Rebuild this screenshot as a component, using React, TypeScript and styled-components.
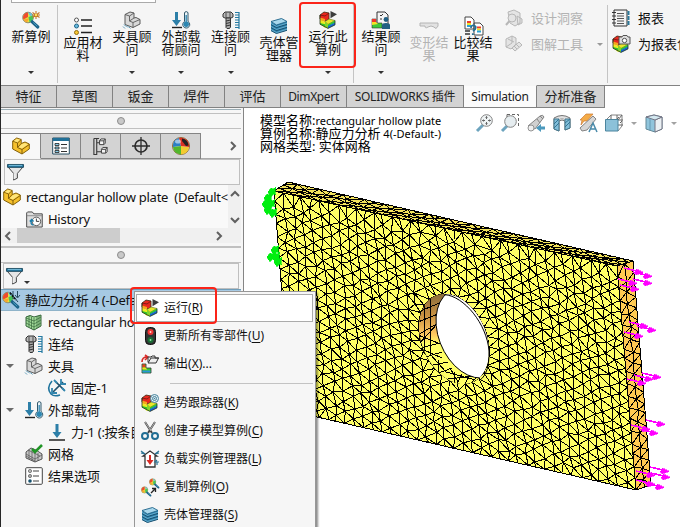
import React from "react";
import styled, { createGlobalStyle } from "styled-components";

const Global = createGlobalStyle`
  * { box-sizing: border-box; }
  body { margin: 0; overflow: hidden; background: #fff; }
`;

const latin = `"Noto Sans", "Noto Sans CJK SC", sans-serif`;

/* ---------- icons (18 x 18 grid) ---------- */

const Magnifier = () => (
  <>
    <circle cx="6" cy="6.5" r="5.3" fill="#e7e13c" stroke="#8a8a72" />
    <path d="M6 1.4a5 5 0 0 0-4.6 7L6 6z" fill="#ef4b2f" />
    <path d="M1.4 8.4A5 5 0 0 0 5 11.4l2-4z" fill="#f7a531" />
    <path d="M6.5 6l4.4-1.4A5 5 0 0 1 7.5 11.3z" fill="#46c35b" />
    <path d="M6 1.5a5 5 0 0 1 4.8 3L8 5z" fill="#62bfe6" />
    <path d="M10.2 10.8l5.6 5.2" stroke="#1c6389" strokeWidth="3.2" strokeLinecap="round" />
    <path d="M11.2 11.4l4 3.7" stroke="#4d9cc0" strokeWidth="1" />
  </>
);

const RainbowCube = () => (
  <>
    <path d="M1 4l4-3 5 1v6l-3 2-6-2z" fill="#e8281e" stroke="#3a2a12" strokeWidth=".8" />
    <path d="M1 4l5 1 4-3" fill="none" stroke="#5c1510" strokeWidth=".7" />
    <path d="M1 6.5l5 1.6v3l-5-1.6z" fill="#f5a51d" />
    <path d="M1 9l5 2 4-2 5 1.5-4 3.5-5 3-5-4z" fill="#ecec20" />
    <path d="M1 12l8 2v3.2l-8-4z" fill="#30c52c" />
    <path d="M6 10.500l4-2.500 6 1.500-7 4z" fill="#e9e62a" stroke="#5f6a1a" strokeWidth=".6" />
    <path d="M6 10.500l3 3v4l-3-1.500z" fill="#7fd52c" />
    <path d="M9 13.500l7-4v2.500l-7 3.500z" fill="#2fc737" />
    <path d="M9 15l7-3.500V14l-7 3.500z" fill="#1767cf" />
    <path d="M1 4v9.2l8 4.2 7-3.500V9.500" fill="none" stroke="#27351d" strokeWidth=".8" />
  </>
);

const Layers = () => (
  <>
    <path d="M1 5l5 2.5v9L1 14zM6 7.500l11-3v9L6 16.500z" fill="#2d7fa8" />
    <path d="M1 4.500L11.500 1.500 17 4.500 6.500 8z" fill="#a8d7ec" stroke="#1d6288" strokeWidth=".9" />
    <path d="M1 7.500l5.500 3L17 7.300M1 10.500l5.500 3L17 10.300M1 13.500l5.500 3L17 13.300" fill="none" stroke="#174f70" />
    <path d="M1 6.500l5.500 3L17 6.200M1 9.500l5.500 3L17 9.200M1 12.500l5.500 3L17 12.200" fill="none" stroke="#71b7d8" strokeWidth=".8" />
  </>
);

const Fixture = () => (
  <g strokeLinejoin="round" stroke="#5a5a5a">
    <path d="M2 3.500L7 1l4 1v5l2-.5 4 2V13l-7 3.500-8-3z" fill="#d8d8d8" />
    <path d="M2 3.500l4.500 1.500V10l3.500 1.500L17 8.500M6.500 5L11 2M6.500 10L11 7M10 11.500v5" fill="none" strokeWidth=".9" />
    <path d="M1 13.500l2 2M3 14.500l2 2M5.500 15.500l2 2M0 15.500l2 2" stroke="#4e93b5" strokeWidth=".9" />
  </g>
);

const DownArrow = ({ x }: { x: number }) => (
  <path d={`M${x - 1.500} 1h3v8h3l-4.500 6-4.500-6h3z`} fill="#2d7fa8" />
);

const drawings: Record<string, React.ReactNode> = {
  newStudy: (
    <>
      <Magnifier />
      <path d="M14 0v8M10.500 1.500l7 5M10.500 6.500l7-5M10 4h8" stroke="#c57828" strokeWidth="1.100" />
      <circle cx="14" cy="4" r="1.200" fill="#ffe45c" />
    </>
  ),
  staticStudy: (
    <>
      <Magnifier />
      <path d="M8 1l8 10M11 0v8M15.500 0v6M13 4l2.500 3L18 4" stroke="#24485a" strokeWidth="1" fill="none" />
      <path d="M8 2l6 7" stroke="#111" strokeWidth="1.600" strokeDasharray="2 1" />
    </>
  ),
  material: (
    <>
      <path d="M7 3h11M7 9h11M7 15.500h11" stroke="#222" strokeWidth="1.400" />
      <circle cx="2.500" cy="3" r="2" fill="#fff" stroke="#555" />
      <circle cx="2.500" cy="9" r="2" fill="#69bce0" stroke="#1e6386" />
      <circle cx="2.500" cy="15.500" r="2" fill="#f6c634" stroke="#906c12" />
    </>
  ),
  fixture: <Fixture />,
  load: (
    <>
      <DownArrow x={4.500} />
      <path d="M0 16.500h10" stroke="#222" strokeWidth="1.400" />
      <path d="M12.500 2a1.800 1.800 0 0 1 3.500 0v8.500a3.500 3.500 0 1 1-3.500 0z" fill="#e9f3f7" stroke="#31586c" />
      <circle cx="14.200" cy="13.300" r="2.700" fill="#2d87b2" />
      <path d="M14.200 4v9" stroke="#2d87b2" strokeWidth="1.300" />
    </>
  ),
  bolt: (
    <>
      <path d="M1 3l2-2h6l2 2v3L9 7H3L1 6z" fill="#b9b9b9" stroke="#333" />
      <path d="M4 1.500v5M8 1.500v5" stroke="#333" strokeWidth=".8" />
      <path d="M4 7h4.500v9l-1 1.500H5l-1-1z" fill="#aaa" stroke="#333" />
      <path d="M4 10l4.500-1M4 12.500l4.500-1M4 15l4.500-1" stroke="#333" />
      <path d="M17 1v17M13 1.500h4M13 4h4M13 6.500h4M13 9h4M13 11.500h4M13 14h4M13 16.500h4" stroke="#247aa2" strokeWidth="1.200" />
    </>
  ),
  layers: <Layers />,
  run: (
    <>
      <RainbowCube />
      <path d="M11.500 0L18 3.200l-6.500 4z" fill="#3c3c3c" />
    </>
  ),
  trend: (
    <>
      <RainbowCube />
      <circle cx="13.500" cy="4.500" r="4" fill="#e3f0f5" stroke="#47839c" />
      <circle cx="13.500" cy="4.500" r="2" fill="none" stroke="#47839c" />
      <circle cx="13.500" cy="4.500" r=".8" fill="#47839c" />
    </>
  ),
  results: (
    <>
      <path d="M5 1h8l3 3v12H5z" fill="#f4f4f4" stroke="#333" />
      <path d="M8 4l1 1 2-2M8 8h2M12 8h2" stroke="#333" fill="none" />
      <path d="M0 8h4v4h6v5H0z" fill="#3ec93a" stroke="#333" strokeWidth=".6" />
      <path d="M0 8h4v3H0z" fill="#ee372a" />
      <path d="M0 11h4l2 2-6 1z" fill="#f3e326" />
      <circle cx="14" cy="8.500" r="2.400" fill="#205f83" />
      <path d="M10 18v-4q0-2 4-2t4 2v4z" fill="#205f83" />
    </>
  ),
  deform: (
    <path d="M0 6h18v3q-2 4-4 1-3-2-6 0-3 2-3-1H0z" fill="#e2e2e2" stroke="#b4b4b4" />
  ),
  compare: (
    <>
      <path d="M1 0h6l3 3v9H1zM10 6h6l3 3v9h-9z" fill="#fff" stroke="#444" />
      <path d="M3 4h4v2H3zM13 9.500h4v2h-4z" fill="#ef3a2b" />
      <path d="M3 6h4v2H3zM13 11.500h4v2h-4z" fill="#ece329" />
      <path d="M3 8h4v2H3zM13 13.500h4v2h-4z" fill="#299fd7" />
      <path d="M1 14h5M1 17h5" stroke="#333" strokeWidth="1.300" />
      <path d="M7 11q0-3 3-2.500t1 4l-2 1.500M8.800 16.200v1.800" fill="none" stroke="#226f96" strokeWidth="1.700" />
    </>
  ),
  insight: (
    <g fill="#e4e4e4" stroke="#b7b7b7">
      <path d="M3 3l6-2 6 3v10l-5 3-5-3zM12 7l5 3v4l-4 2z" />
      <circle cx="7" cy="9" r="4" />
      <path d="M4.500 12L1 16" strokeWidth="2" />
    </g>
  ),
  plot: (
    <g fill="#e4e4e4" stroke="#b7b7b7">
      <path d="M1 4l6-3 4 2v6l-5 5-5-2zM7 1v7l-6 4M3 4l6 3" />
      <path d="M7 13l7-6 3 3-7 6zM9 11l3 3M11 9l3 3" />
    </g>
  ),
  report: (
    <>
      <path d="M2 1h13v16H2z" fill="#f3f3f3" stroke="#333" />
      <path d="M5 4.500h7M5 7h7M5 9.500h7M5 12h7M5 14.500h7" stroke="#555" />
      <path d="M0 3.500h4M0 7h4M0 10.500h4M0 14h4" stroke="#333" strokeWidth="1.200" />
      <path d="M16.500 2v14" stroke="#2c789a" strokeWidth="2" strokeDasharray="4 1" />
    </>
  ),
  snapshot: (
    <>
      <RainbowCube />
      <path d="M7 2h3l1-1.500h4L16 2h2v7H7z" fill="#ddd" stroke="#555" />
      <circle cx="12.500" cy="5.500" r="2.200" fill="#fff" stroke="#555" />
    </>
  ),
  part: (
    <g stroke="#84610b" strokeLinejoin="round">
      <path d="M.7 4l4-3 4.500 1.500v4l3.800-1.500 4.300 2v5L10 17l-9.300-5z" fill="#f5c02c" />
      <path d="M.7 4l4.800 2L9.200 2.500M5.500 6v4.500L10 12.500l7.300-5M10 12.500V17M5.500 10.500l3.700-4" fill="none" />
      <path d="M1.800 4l3.100-2.200 3.200 1-2.700 2.400zM6.700 10.200l3-3 3.300-1.300 3 1.300-6 4.200z" fill="#ffe57c" stroke="none" />
    </g>
  ),
  props: (
    <>
      <path d="M.7 1h16.600v16H.7z" fill="#fff" stroke="#254c60" />
      <path d="M1 1h16v3H1z" fill="#217097" />
      <path d="M3 6.500h4v2H3zM3 10h4v2H3zM3 13.500h4v2H3z" fill="#8bd0ed" stroke="#222" strokeWidth=".8" />
      <path d="M9 7.500h6M9 11h6M9 14.500h6" stroke="#333" />
    </>
  ),
  config: (
    <g fill="#f4f4f4" stroke="#3a3a3a">
      <path d="M2 .5h5.500M2 .5v17h3v-17M5 5h3M5 14.500h5" fill="none" strokeWidth="1.200" />
      <path d="M8 3l1.500-2H14v4.500L12.500 7H8zM10 12l1.500-2H16v4.500L14.500 16H10z" />
      <path d="M8 3h4.500V7M12.500 3L14 1M10 12h4.500v4M14.500 12L16 10" fill="none" />
    </g>
  ),
  target: (
    <g fill="none" stroke="#2c2c2c" strokeWidth="1.700">
      <circle cx="9" cy="9" r="6" />
      <path d="M9 0v18M0 9h18" strokeWidth="1.300" />
    </g>
  ),
  appearance: (
    <>
      <circle cx="9" cy="9" r="8.500" fill="#eee" stroke="#8c6a35" />
      <path d="M9 9L1 10A8 8 0 0 1 7 1z" fill="#2c7fc5" />
      <path d="M9 9L1 10a8 8 0 0 0 8 7.500z" fill="#52b72d" />
      <path d="M9 9v8.500A8 8 0 0 0 17 10z" fill="#f3cb2f" />
      <path d="M9 9L7 1a8 8 0 0 1 10 9z" fill="#db3024" />
      <path d="M10 1.500q6 1 6.500 7l-2.500.5-4-5z" fill="#222" />
      <ellipse cx="6" cy="4.500" rx="3" ry="2" fill="#fff" opacity=".55" />
    </>
  ),
  history: (
    <>
      <path d="M.7 17V2l1-1h5l1.500 2h9v14z" fill="#ddd" stroke="#444" />
      <path d="M1 5h16" stroke="#888" />
      <circle cx="11" cy="11" r="4.500" fill="#fff" stroke="#555" />
      <path d="M11 8v3h3" fill="none" stroke="#333" />
      <path d="M8 15q-4-1-2-5M4 11l2-2 2 2" fill="none" stroke="#1e7da9" strokeWidth="1.500" />
    </>
  ),
  filter: (
    <>
      <path d="M1 3l6 7v7l4-2v-5l6-7z" fill="#e6e6e6" stroke="#3d3d3d" />
      <path d="M7.500 10V16" stroke="#fff" />
      <path d="M.5 .5h17v3H.5z" fill="#277ba4" stroke="#1f4b61" />
      <path d="M2 1.500h14" stroke="#7cc1de" />
    </>
  ),
  mesh: (
    <>
      <path d="M1 4q4-3 8 0l7-2v11l-7 4-8-4z" fill="#a3dc9a" stroke="#35643a" />
      <path d="M1 7l8 4 7-4M1 10l8 4 7-4M4 3v11M6.500 4v12M9 5v12M12 3v12M14 3v11M1 5l8 3 7-4" fill="none" stroke="#35643a" strokeWidth=".7" />
    </>
  ),
  meshOk: (
    <>
      <path d="M1 7l5-4 5 2 6 4v5l-7 3-9-4z" fill="#c8c8c8" stroke="#555" />
      <path d="M1 9l9 5 7-4M1 11l9 5M4 5v9M7 6v10M10 8v9M13 8v8M3 5l12 6" fill="none" stroke="#555" strokeWidth=".7" />
      <path d="M7 4l3 3 7-7" fill="none" stroke="#219526" strokeWidth="2.600" />
    </>
  ),
  fixed: (
    <>
      <path d="M4 2Q-2 9 3 15q3 3 9 1" fill="none" stroke="#21759e" strokeWidth="1.600" />
      <path d="M5 13L15 3M8 3l8 8" stroke="#21506b" strokeWidth="1.700" />
      <path d="M13 0v5h5M6 1l3 3M14 9l3 3M4 9v5h5" fill="none" stroke="#3386ae" strokeWidth="1.800" />
    </>
  ),
  force: (
    <>
      <DownArrow x={9} />
      <path d="M1 17h16" stroke="#222" strokeWidth="1.500" />
    </>
  ),
  options: (
    <>
      <rect x=".7" y=".7" width="16.600" height="16.600" rx="1" fill="#fff" stroke="#444" />
      <path d="M8 4h6M8 9h6M8 14h6" stroke="#444" />
      <circle cx="5" cy="4" r="1.600" fill="#bbb" stroke="#555" strokeWidth=".7" />
      <circle cx="5" cy="9" r="1.600" fill="#aaa" stroke="#555" strokeWidth=".7" />
      <circle cx="5" cy="14" r="1.800" fill="#18526f" />
    </>
  ),
  traffic: (
    <>
      <rect x="4.500" y=".5" width="10" height="17" rx="4" fill="#333" stroke="#111" />
      <circle cx="9.500" cy="5" r="3" fill="#e33" />
      <circle cx="9.500" cy="13" r="3" fill="#196c35" />
      <path d="M8.500 5h2M9.500 4v2" stroke="#ffc7bd" />
      <path d="M8.500 13h2M9.500 12v2" stroke="#8ae09d" />
    </>
  ),
  output: (
    <>
      <path d="M1 7q0-5 5-5M4 0l3 2-3 3" fill="none" stroke="#d62a27" strokeWidth="1.600" />
      <path d="M7 7V2h3l1-1h3v2h3.500L15 8H7l3-5h8" fill="#eee" stroke="#333" />
      <path d="M1 9h4v4h5v5H1z" fill="#35ca36" stroke="#333" strokeWidth=".8" />
      <path d="M1.400 9.400h3v3h-3z" fill="#eb3a25" />
      <path d="M1.400 12.400h3l2 2h-5z" fill="#f5df20" />
      <path d="M1.400 15.500h8v2h-8z" fill="#2a94da" />
    </>
  ),
  scissors: (
    <>
      <path d="M4 0l7 11M14 0L7 11" stroke="#444" strokeWidth="2" />
      <path d="M4 0l6 9M14 0L9 8" stroke="#ddd" strokeWidth=".7" />
      <circle cx="4" cy="14" r="3" fill="none" stroke="#226e94" strokeWidth="2" />
      <circle cx="14" cy="14" r="3" fill="none" stroke="#226e94" strokeWidth="2" />
    </>
  ),
  loadCase: (
    <>
      <path d="M4 17V6H2l7-5 7 5h-2v11z" fill="#fff" stroke="#333" strokeWidth="1.300" />
      <path d="M9 5v6" stroke="#d92923" strokeWidth="2" />
      <path d="M5.500 10h7L9 15z" fill="#d92923" />
      <path d="M0 1l4 3M18 1l-4 3M0 3l4 1M18 3l-4 1M18 12h-4l2-2M16 12v3" stroke="#2b7393" strokeWidth="1.200" fill="none" />
    </>
  ),
  copy: (
    <>
      <g transform="translate(8 0) scale(.6)"><Magnifier /></g>
      <g transform="translate(0 8) scale(.6)"><Magnifier /></g>
      <path d="M10 15l4-4M11 10.500h3.500V14" stroke="#222" fill="none" strokeWidth="1.300" />
    </>
  ),
  zoomFit: (
    <>
      <path d="M8 11l-6 6" stroke="#5e9bb8" strokeWidth="3" />
      <circle cx="11.500" cy="6.500" r="5.800" fill="#eef3f5" stroke="#777" />
      <path d="M11.500 2.500v2.500M11.500 8v2.500M7.500 6.500H10M13 6.500h2.500M10.500 3.500l1-1 1 1M10.500 9.500l1 1 1-1M8.500 5.500l-1 1 1 1M14.500 5.500l1 1-1 1" stroke="#444" fill="none" strokeWidth=".9" />
    </>
  ),
  zoomArea: (
    <>
      <path d="M6 .5h11.500V13M6 .5V4" fill="none" stroke="#555" strokeDasharray="3 2" />
      <path d="M6 12l-5 5" stroke="#5e9bb8" strokeWidth="3" />
      <circle cx="9.500" cy="7.500" r="5.800" fill="#e4ecef" stroke="#777" />
    </>
  ),
  previous: (
    <>
      <path d="M1 12L13 2q3-2 4 1L8 15z" fill="#ccc" stroke="#777" />
      <ellipse cx="4" cy="14" rx="3" ry="3" fill="#eee" stroke="#888" />
      <path d="M10 5l3 4M13 2l3 3" stroke="#777" />
      <path d="M18 12.500h-4V10l-5 4 5 4v-2.500h4z" fill="#398eb6" />
    </>
  ),
  section: (
    <>
      <path d="M1 4q8-5 16 0v10l-5 2V7q-3-2-6 0v10l-5-2z" fill="#ddd" stroke="#666" />
      <path d="M1 5h5v12l-5-2zM12 5h5v9l-5 2z" fill="#75b8d5" stroke="#306982" />
      <path d="M1 10l5-5M1 14l5-5M12 9l5-4M12 13l5-5" stroke="#1e6688" />
      <path d="M7 5q2-1 4 0" fill="none" stroke="#aaa" />
    </>
  ),
  annotate: (
    <>
      <path d="M7 0h7L8 7H5l-3 4 1-5H1z" fill="#f3a334" stroke="#c56c20" strokeWidth=".7" />
      <path d="M1 14L14 2l3 3-9 11-5 1z" fill="#d2d2d2" stroke="#777" />
      <path d="M10 18l4-9 4 9M11.500 15h5" fill="none" stroke="#367ea1" strokeWidth="1.500" />
    </>
  ),
  orient: (
    <>
      <path d="M1 6l5-5h11v11l-4 5" fill="none" stroke="#777" />
      <path d="M6 1v5M17 1l-4 5M12 1v5M13 6h5M13 11h5M14 3l-2 2M15 9l2-2" stroke="#555" />
      <path d="M.5 5.500H13V17H.5z" fill="#80bbd5" stroke="#397894" />
    </>
  ),
  display: (
    <>
      <path d="M1 3l8-2 8 2v12l-7 3-9-3z" fill="#85bfd9" stroke="#537c8d" />
      <path d="M10 6l7-3v12l-7 3z" fill="#e9f0f3" stroke="#667" />
      <path d="M1 3l9 3 7-3-8-2z" fill="#cfe6ef" stroke="#667" />
      <path d="M5 4.500v12" stroke="#548fac" />
    </>
  ),
};

const Svg = styled.svg<{ $size?: number }>`
  width: ${(p) => p.$size ?? 18}px;
  height: ${(p) => p.$size ?? 18}px;
  flex: none;
  display: block;
  overflow: visible;
`;

const Icon = ({ name, size }: { name: string; size?: number }) => (
  <Svg viewBox="0 0 18 18" $size={size}>{drawings[name]}</Svg>
);

const Caret = styled.span<{ $pale?: boolean }>`
  flex: none;
  width: 0;
  height: 0;
  border: 3px solid transparent;
  border-top-color: ${(p) => (p.$pale ? "#999" : "#333")};
  border-bottom: 0;
`;

/* ---------- ribbon ---------- */

const Window = styled.div`
  position: relative;
  width: 680px;
  height: 527px;
  overflow: hidden;
  display: flex;
  flex-direction: column;
  border-left: 1px solid #262626;
  background: #fff;
  color: #111;
  font: 13px/13px ${latin};
  white-space: nowrap;
`;

const Ribbon = styled.div`
  height: 85px;
  flex: none;
  display: flex;
  background: #f5f5f5;
  padding-left: 5px;
`;

const CommandBox = styled.div<{ $w: number; $top: number; $off?: boolean }>`
  position: relative;
  width: ${(p) => p.$w}px;
  height: 85px;
  flex: none;
  padding-top: ${(p) => p.$top}px;
  display: flex;
  flex-direction: column;
  align-items: center;
  color: ${(p) => (p.$off ? "#b3b3b3" : "#111")};
`;

const CommandText = styled.div`
  margin-top: 1px;
  text-align: center;
  white-space: pre;
`;

const CommandCaret = styled(Caret)`
  position: absolute;
  top: 71px;
`;

const Divider = styled.div<{ $m?: string }>`
  width: 1px;
  flex: none;
  height: 78px;
  margin: ${(p) => p.$m ?? "5px 0 0"};
  background: #c4c4c4;
`;

const Stack = styled.div<{ $m: number; $w: number }>`
  width: ${(p) => p.$w}px;
  margin-left: ${(p) => p.$m}px;
  flex: none;
  padding-top: 9px;
  display: flex;
  flex-direction: column;
  gap: 8px;
`;

const StackRow = styled.div<{ $off?: boolean }>`
  height: 18px;
  display: flex;
  align-items: center;
  gap: 8px;
  color: ${(p) => (p.$off ? "#b3b3b3" : "#111")};
`;

const StackCaret = styled(Caret)`
  margin-left: 6px;
`;

const QuickStrip = styled.div`
  position: absolute;
  left: 10px;
  top: 0;
  width: 145px;
  height: 3px;
  background: #fff;
  border: 1px solid #aaa;
  border-top: 0;
`;

const TabBar = styled.div`
  height: 23px;
  flex: none;
  display: flex;
  background: linear-gradient(#828282, #828282) top / 100% 1px no-repeat #fff;
`;

const Tab = styled.div<{ $w: number; $on?: boolean; $ls?: number; $cjk?: boolean }>`
  width: ${(p) => p.$w}px;
  flex: none;
  height: 23px;
  border: 1px solid #828282;
  border-left: 0;
  border-top-color: ${(p) => (p.$on ? "#f5f5f5" : "#828282")};
  background: ${(p) => (p.$on ? "#fbfbfb" : "#d3d3d3")};
  font-size: ${(p) => (p.$cjk ? 13 : 12)}px;
  letter-spacing: ${(p) => p.$ls ?? 0}px;
  color: #222;
  display: flex;
  align-items: center;
  justify-content: center;
`;

/* ---------- left panel ---------- */

const Body = styled.div`
  flex: 1;
  min-height: 0;
  display: flex;
`;

const Panel = styled.div`
  width: 243px;
  flex: none;
  padding-top: 1px;
  background: #f6f6f6;
  border-right: 1px solid #858585;
  display: flex;
  flex-direction: column;
  overflow: hidden;
`;

const Grip = styled.div<{ $h: number; $thick?: boolean }>`
  width: 240px;
  height: ${(p) => p.$h}px;
  flex: none;
  margin-top: ${(p) => (p.$thick ? 3 : 0)}px;
  border-top: ${(p) => (p.$thick ? 2 : 1)}px solid #c0c0c0;
  border-bottom: 1px solid #c0c0c0;
  display: flex;
  align-items: center;
  justify-content: center;
  &::after {
    content: "";
    width: 6px;
    height: 6px;
    border-radius: 50%;
    border: 1px solid #8c8c8c;
    background: #c9c9c9;
  }
`;

const TopLine = styled.div`
  width: 240px;
  height: 4px;
  flex: none;
  border-top: 1px solid #9cafb7;
`;

const PanelTabs = styled.div`
  width: 240px;
  height: 26px;
  margin-top: 4px;
  flex: none;
  display: flex;
`;

const PanelTab = styled.div<{ $on?: boolean }>`
  width: 40px;
  height: 26px;
  border: 1px solid #858585;
  border-left: 0;
  border-bottom-color: ${(p) => (p.$on ? "#f6f6f6" : "#858585")};
  background: ${(p) => (p.$on ? "#f8f8f8" : "#d3d3d3")};
  display: flex;
  align-items: center;
  justify-content: center;
`;

const MoreTab = styled.div`
  flex: 1;
  border-bottom: 1px solid #aaa;
  display: flex;
  align-items: center;
  justify-content: flex-end;
  padding-right: 5px;
`;

const FilterBox = styled.div<{ $left: number }>`
  width: 236px;
  height: 26px;
  flex: none;
  margin-left: ${(p) => p.$left}px;
  border: 1px solid #bfbfbf;
  padding-left: 2px;
  display: flex;
  align-items: center;
  gap: 1px;
`;

const FilterCaret = styled(Caret)`
  margin-top: 12px;
`;

const UpperTree = styled.div`
  height: 43px;
  width: 240px;
  flex: none;
  display: flex;
  overflow: hidden;
`;

const UpperRows = styled.div`
  width: 227px;
  padding-top: 1px;
  overflow: hidden;
  background: #f9f9f9;
`;

const VScroll = styled.div`
  width: 13px;
  background: #f0f0f0;
  display: flex;
  flex-direction: column;
  justify-content: space-between;
  align-items: center;
  padding: 6px 0 5px;
`;

const HScroll = styled.div`
  width: 240px;
  height: 15px;
  flex: none;
  background: #f0f0f0;
  display: flex;
  align-items: center;
  padding-left: 4px;
`;

const Thumb = styled.div`
  width: 103px;
  height: 15px;
  flex: none;
  margin: 0 96px 0 6px;
  background: #cdcdcd;
`;

const Row = styled.div<{ $indent: number; $on?: boolean; $ls?: number }>`
  width: 240px;
  height: 22px;
  flex: none;
  padding-left: ${(p) => p.$indent}px;
  display: flex;
  align-items: center;
  gap: 5px;
  letter-spacing: ${(p) => p.$ls ?? 0}px;
  white-space: pre;
  background: ${(p) => (p.$on ? "#a6c9e3" : "transparent")};
  box-shadow: ${(p) => (p.$on ? "inset 0 1px #6f9db9, inset 0 -1px #8fb3c9" : "none")};
`;

const Expander = styled(Caret)`
  border-width: 4px;
  border-top-color: #6a6a6a;
  border-bottom: 0;
  margin-right: 6px;
`;

const ChevronSvg = styled.svg`
  display: block;
  flex: none;
  overflow: visible;
`;

const Chevron = ({ d, w = 6, h = 8 }: { d: string; w?: number; h?: number }) => (
  <ChevronSvg width={w} height={h}>
    <path d={d} fill="none" stroke="#606060" strokeWidth="2" />
  </ChevronSvg>
);

/* ---------- viewport ---------- */

const Viewport = styled.div`
  position: relative;
  flex: 1;
  background: #fff;
`;

const ModelInfo = styled.div`
  position: absolute;
  left: 16px;
  top: 6px;
  font-size: 13px;
  line-height: 13px;
  color: #000;
`;

const InfoLine = styled.div`
  display: flex;
  white-space: pre;
`;

const InfoLatin = styled.span<{ $ls?: number }>`
  font-size: 11px;
  letter-spacing: ${(p) => p.$ls ?? 0}px;
`;

const HeadsUp = styled.div`
  position: absolute;
  left: 231px;
  top: 6px;
  display: flex;
  align-items: center;
  gap: 8px;
  opacity: 0.9;
`;

const ModelSvg = styled.svg`
  position: absolute;
  left: 0;
  top: 0;
`;

type P = [number, number];

const seeded = (seed: number) => () => {
  seed = (seed * 16807) % 2147483647;
  return seed / 2147483647;
};

/* Bowyer-Watson triangulation */
function triangulate(input: P[]): number[][] {
  const pts = input.slice();
  const n = pts.length;
  pts.push([-5000, -5000], [5000, -5000], [0, 9000]);
  const make = (a: number, b: number, c: number) => {
    const [ax, ay] = pts[a], [bx, by] = pts[b], [cx, cy] = pts[c];
    const d = 2 * (ax * (by - cy) + bx * (cy - ay) + cx * (ay - by));
    const a2 = ax * ax + ay * ay, b2 = bx * bx + by * by, c2 = cx * cx + cy * cy;
    const x = (a2 * (by - cy) + b2 * (cy - ay) + c2 * (ay - by)) / d;
    const y = (a2 * (cx - bx) + b2 * (ax - cx) + c2 * (bx - ax)) / d;
    return { v: [a, b, c], x, y, r: (ax - x) ** 2 + (ay - y) ** 2 };
  };
  let tris = [make(n, n + 1, n + 2)];
  for (let i = 0; i < n; i++) {
    const [x, y] = pts[i];
    const edges = new Map<string, [number, number]>();
    const keep: typeof tris = [];
    for (const t of tris) {
      if ((x - t.x) ** 2 + (y - t.y) ** 2 < t.r) {
        for (let k = 0; k < 3; k++) {
          const a = t.v[k], b = t.v[(k + 1) % 3];
          const key = a < b ? `${a},${b}` : `${b},${a}`;
          if (edges.has(key)) edges.delete(key);
          else edges.set(key, [a, b]);
        }
      } else keep.push(t);
    }
    edges.forEach(([a, b]) => keep.push(make(a, b, i)));
    tris = keep;
  }
  return tris.map((t) => t.v).filter((v) => v.every((k) => k < n));
}

interface Hole { x: number; y: number; rx: number; ry: number }

/* Meshes a w x h rectangle and maps it on the quad tl, tr, br, bl. */
function meshPath(w: number, h: number, cols: number, rows: number, jitter: number, quad: P[], seed: number, hole?: Hole) {
  const rnd = seeded(seed);
  const pts: P[] = [];
  const dx = w / cols, dy = h / rows;
  const inHole = (x: number, y: number, m: number) =>
    !!hole && Math.hypot((x - hole.x) / (hole.rx + m), (y - hole.y) / (hole.ry + m)) < 1;
  for (let i = 0; i <= cols; i++) {
    for (let j = 0; j <= rows; j++) {
      const edgeX = i === 0 || i === cols, edgeY = j === 0 || j === rows;
      const shift = !edgeX && !edgeY && i % 2 ? dy * 0.45 : 0;
      const x = i * dx + (edgeX ? (rnd() - 0.5) * 0.01 : (rnd() - 0.5) * jitter * dx);
      const y = j * dy + (edgeY ? (rnd() - 0.5) * 0.01 : shift + (rnd() - 0.5) * jitter * dy);
      if (y < h + 0.1 && !inHole(x, y, dx * 0.6)) pts.push([x, y]);
    }
  }
  if (hole) {
    for (let k = 0; k < 28; k++) {
      const a = (k / 28) * Math.PI * 2 + 0.003 * rnd();
      pts.push([hole.x + hole.rx * Math.cos(a), hole.y + hole.ry * Math.sin(a)]);
    }
  }
  const map = ([x, y]: P) => {
    const u = x / w, v = y / h;
    const c = (k: 0 | 1) =>
      (1 - v) * ((1 - u) * quad[0][k] + u * quad[1][k]) + v * ((1 - u) * quad[3][k] + u * quad[2][k]);
    return `${c(0).toFixed(1)} ${c(1).toFixed(1)}`;
  };
  let d = "";
  const seen = new Set<string>();
  for (const t of triangulate(pts)) {
    const cx = (pts[t[0]][0] + pts[t[1]][0] + pts[t[2]][0]) / 3;
    const cy = (pts[t[0]][1] + pts[t[1]][1] + pts[t[2]][1]) / 3;
    if (inHole(cx, cy, -1)) continue;
    for (let k = 0; k < 3; k++) {
      const a = Math.min(t[k], t[(k + 1) % 3]), b = Math.max(t[k], t[(k + 1) % 3]);
      const key = `${a},${b}`;
      if (seen.has(key)) continue;
      seen.add(key);
      d += `M${map(pts[a])}L${map(pts[b])}`;
    }
  }
  return d;
}

/* plate corners in window coordinates */
const TL: P = [274, 191], TR: P = [617, 266], BR: P = [636, 490], BL: P = [291, 411];
const BTL: P = [288, 182], BTR: P = [633, 261], BBR: P = [651, 485];
const poly = (...p: P[]) => p.map((q) => q.join(",")).join(" ");

const HOLE: Hole = { x: 172, y: 112, rx: 35.3, ry: 45 };
const frontMesh = meshPath(345, 225, 38, 20, 0.36, [TL, TR, BR, BL], 77, HOLE);
const topMesh = meshPath(345, 40, 32, 3, 0.3, [BTL, BTR, TR, TL], 12);
const sideMesh = meshPath(22, 225, 2, 19, 0.4, [TR, BTR, BBR, BR], 5);

const holeMatrix = (cx: number, cy: number) => `matrix(34.8 7.5 3.7 44.4 ${cx} ${cy})`;

/* tips of the force arrows */
const arrows: P[] = [
  [643, 272], [652, 276], [637, 283], [652, 283], [639, 289], [648, 326], [656, 330], [643, 336],
  [661, 377], [653, 379], [646, 383], [665, 424], [650, 429], [658, 433],
  [669, 471], [655, 475], [670, 477], [655, 484], [664, 487],
];

const pins: P[] = [[272, 191], [268, 197], [266, 203], [271, 203], [268, 209], [273, 212], [275, 249], [271, 256], [276, 256], [278, 261]];

const Model = () => (
  <ModelSvg width="436" height="419" viewBox="244 108 436 419">
    <defs>
      <clipPath id="frontRim"><circle r="1" transform={holeMatrix(454, 339)} /></clipPath>
      <linearGradient id="bore" x1="0" y1="0" x2="0" y2="1">
        <stop offset="0" stopColor="#83683a" />
        <stop offset=".25" stopColor="#c99242" />
        <stop offset=".45" stopColor="#ffc861" />
        <stop offset=".55" stopColor="#ffff66" />
        <stop offset="1" stopColor="#ffff66" />
      </linearGradient>
    </defs>
    <polygon points={poly(BTL, BTR, TR, TL)} fill="#f3e35c" />
    <polygon points={poly(TR, BTR, BBR, BR)} fill="#ffca52" />
    <polygon points={poly(TL, TR, BR, BL)} fill="#ffff66" />
    <g fill="none" stroke="#000" strokeWidth="1" shapeRendering="crispEdges">
      <path d={topMesh} />
      <path d={sideMesh} />
      <path d={frontMesh} />
    </g>
    <g clipPath="url(#frontRim)">
      <rect x="418" y="292" width="73" height="94" fill="url(#bore)" />
      <path
        d="M418 312l24-10M418 322l20-8M418 335l20 8M418 335l20-12M420 348l20-5M422 358l20-6M424 300v50l18 8M430 294v60l16 18M438 360v22M418 345l20-22M428 366l20-4M436 374l16-6M440 380l50-6M446 372l44 12M454 372v14M462 374l-6 12M470 374l-6 12M478 376l-8 8M450 368l8 14"
        fill="none"
        stroke="#000"
        shapeRendering="crispEdges"
      />
      <circle r="1" transform={holeMatrix(471, 333)} fill="#fff" />
      <circle r="1" transform={holeMatrix(471, 333)} fill="none" stroke="#000" vectorEffect="non-scaling-stroke" />
    </g>
    <path d="M444.500 294.600C464 296 487 324 489 351C489.500 366 486 376 480 380" fill="none" stroke="#000" />
    <g fill="#00ee10" stroke="#00ee10" strokeWidth=".6" shapeRendering="crispEdges">
      {pins.map(([x, y], i) => (
        <path key={i} d={`M${x - 4} ${y + 1}l3-4 2 1 3-2-1 5 1 3-3-1-2 3z`} />
      ))}
    </g>
    <g fill="#ff00ff" stroke="#ff00ff" shapeRendering="crispEdges">
      {arrows.map(([x, y], i) => (
        <g key={i}>
          <path d={`M${x - 19} ${y - 4}L${x - 6} ${y - 1}`} strokeWidth="1.600" />
          <path d={`M${x} ${y + 0.5}l-7 2.500-1.500-2.500 2-3.500z`} strokeWidth=".6" />
        </g>
      ))}
    </g>
  </ModelSvg>
);

/* ---------- context menu ---------- */

const Menu = styled.div`
  position: absolute;
  left: 133px;
  top: 291px;
  width: 182px;
  height: 250px;
  padding: 2px 1px;
  background: #f6f6f6;
  border: 1px solid #979797;
  box-shadow: 2px 2px 2px rgba(0, 0, 0, 0.45);
  font-size: 12px;
  line-height: 14px;
`;

const MenuItem = styled.div<{ $on?: boolean }>`
  height: 28px;
  width: 177px;
  display: flex;
  align-items: center;
  gap: 5px;
  padding-left: 4px;
  border: 1px solid ${(p) => (p.$on ? "#ababab" : "transparent")};
  background: ${(p) => (p.$on ? "#fff" : "transparent")};
`;

const MenuRule = styled.div`
  height: 1px;
  margin: 5px 1px 5px 34px;
  background: #c3c3c3;
`;

const Mnemonic = styled.span`
  text-decoration: underline;
  text-underline-offset: 2px;
`;

const Highlight = styled.div<{ $x: number; $y: number; $w: number; $h: number }>`
  position: absolute;
  left: ${(p) => p.$x}px;
  top: ${(p) => p.$y}px;
  width: ${(p) => p.$w}px;
  height: ${(p) => p.$h}px;
  border: 2px solid #fb2419;
  border-radius: 4px;
`;

interface CommandProps { w: number; top: number; icon: string; text: string; caret?: boolean; off?: boolean }

const Command = ({ w, top, icon, text, caret, off }: CommandProps) => (
  <CommandBox $w={w} $top={top} $off={off}>
    <Icon name={icon} />
    <CommandText>{text}</CommandText>
    {caret && <CommandCaret />}
  </CommandBox>
);

interface EntryProps { icon: string; label: string; k: string; tail?: string; on?: boolean }

const Entry = ({ icon, label, k, tail, on }: EntryProps) => (
  <MenuItem $on={on}>
    <Icon name={icon} />
    <span>{label}(<Mnemonic>{k}</Mnemonic>){tail}</span>
  </MenuItem>
);

export default function App() {
  return (
    <>
      <Global />
      <Window>
        <Ribbon>
          <Command w={50} top={11} icon="newStudy" text="新算例" caret />
          <Divider $m="5px 0 0 1px" />
          <Command w={50} top={17} icon="material" text={"应用材\n料"} />
          <Command w={48} top={11} icon="fixture" text={"夹具顾\n问"} caret />
          <Command w={50} top={11} icon="load" text={"外部载\n荷顾问"} caret />
          <Command w={49} top={11} icon="bolt" text={"连接顾\n问"} caret />
          <Command w={48} top={17} icon="layers" text={"壳体管\n理器"} />
          <Command w={50} top={11} icon="run" text={"运行此\n算例"} caret />
          <Divider $m="5px 2px 0 0" />
          <Command w={50} top={11} icon="results" text={"结果顾\n问"} caret />
          <Command w={46} top={17} icon="deform" text={"变形结\n果"} off />
          <Command w={42} top={17} icon="compare" text={"比较结\n果"} />
          <Stack $m={11} $w={102}>
            <StackRow $off><Icon name="insight" />设计洞察</StackRow>
            <StackRow $off><Icon name="plot" />图解工具<StackCaret $pale /></StackRow>
          </Stack>
          <Divider />
          <Stack $m={4} $w={90}>
            <StackRow><Icon name="report" />报表</StackRow>
            <StackRow><Icon name="snapshot" />为报表包</StackRow>
          </Stack>
        </Ribbon>
        <QuickStrip />
        <TabBar>
          <Tab $w={56} $cjk>特征</Tab>
          <Tab $w={56} $cjk>草图</Tab>
          <Tab $w={56} $cjk>钣金</Tab>
          <Tab $w={56} $cjk>焊件</Tab>
          <Tab $w={56} $cjk>评估</Tab>
          <Tab $w={66} $ls={-0.35}>DimXpert</Tab>
          <Tab $w={117} $ls={-0.25}>SOLIDWORKS 插件</Tab>
          <Tab $w={73} $ls={-0.3} $on>Simulation</Tab>
          <Tab $w={68} $cjk>分析准备</Tab>
        </TabBar>
        <Body>
          <Panel>
            <TopLine />
            <Grip $h={16} />
            <PanelTabs>
              <PanelTab $on><Icon name="part" /></PanelTab>
              <PanelTab><Icon name="props" /></PanelTab>
              <PanelTab><Icon name="config" size={17} /></PanelTab>
              <PanelTab><Icon name="target" /></PanelTab>
              <PanelTab><Icon name="appearance" /></PanelTab>
              <MoreTab><Chevron d="M1 0l4 4-4 4" /></MoreTab>
            </PanelTabs>
            <FilterBox $left={3}><Icon name="filter" size={17} /></FilterBox>
            <UpperTree>
              <UpperRows>
                <Row $indent={2} $ls={-0.27}><Icon name="part" />rectangular hollow plate  (Default&lt;</Row>
                <Row $indent={25} $ls={-0.27}><Icon name="history" size={17} />History</Row>
              </UpperRows>
              <VScroll>
                <Chevron d="M0 5l4-4 4 4" w={8} h={6} />
                <Chevron d="M0 1l4 4 4-4" w={8} h={6} />
              </VScroll>
            </UpperTree>
            <HScroll>
              <Chevron d="M5 0L1 4l4 4" />
              <Thumb />
              <Chevron d="M1 0l4 4-4 4" />
            </HScroll>
            <Grip $h={17} $thick />
            <FilterBox $left={2}><Icon name="filter" size={17} /><FilterCaret /></FilterBox>
            <Row $indent={1} $on $ls={-0.3}>
              <Icon name="staticStudy" />静应力分析 4 (-Default-)
            </Row>
            <Row $indent={24} $ls={-0.27}><Icon name="mesh" />rectangular hollow plate</Row>
            <Row $indent={24}><Icon name="bolt" />连结</Row>
            <Row $indent={5}><Expander /><Icon name="fixture" />夹具</Row>
            <Row $indent={47} $ls={-0.2}><Icon name="fixed" />固定-1</Row>
            <Row $indent={5}><Expander /><Icon name="load" />外部载荷</Row>
            <Row $indent={47} $ls={-0.3}><Icon name="force" />力-1 (:按条目:</Row>
            <Row $indent={24}><Icon name="meshOk" />网格</Row>
            <Row $indent={24}><Icon name="options" />结果选项</Row>
          </Panel>
          <Viewport>
            <Model />
            <ModelInfo>
              <InfoLine>模型名称:<InfoLatin>rectangular hollow plate</InfoLatin></InfoLine>
              <InfoLine>算例名称:静应力分析<InfoLatin> 4(-Default-)</InfoLatin></InfoLine>
              <InfoLine>网格类型: 实体网格</InfoLine>
            </ModelInfo>
            <HeadsUp>
              <Icon name="zoomFit" />
              <Icon name="zoomArea" />
              <Icon name="previous" />
              <Icon name="section" />
              <Icon name="annotate" />
              <Icon name="orient" />
              <Caret $pale />
              <Icon name="display" />
              <Caret $pale />
            </HeadsUp>
          </Viewport>
        </Body>
        <Menu>
          <Entry icon="run" label="运行" k="R" on />
          <Entry icon="traffic" label="更新所有零部件" k="U" />
          <Entry icon="output" label="输出" k="X" tail="..." />
          <MenuRule />
          <Entry icon="trend" label="趋势跟踪器" k="K" />
          <Entry icon="scissors" label="创建子模型算例" k="C" />
          <Entry icon="loadCase" label="负载实例管理器" k="L" />
          <Entry icon="copy" label="复制算例" k="O" />
          <Entry icon="layers" label="壳体管理器" k="S" />
        </Menu>
        <Highlight $x={298} $y={2} $w={57} $h={66} />
        <Highlight $x={129} $y={287} $w={87} $h={37} />
      </Window>
    </>
  );
}
